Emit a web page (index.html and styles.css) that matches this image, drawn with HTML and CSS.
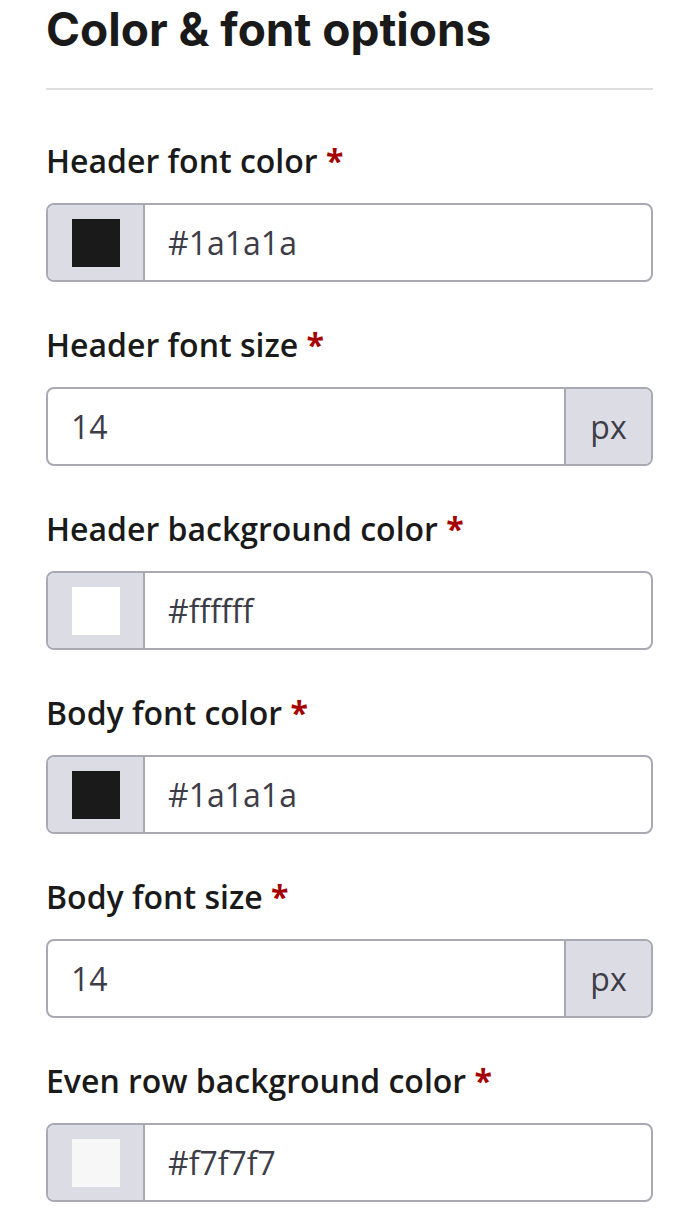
FILE: index.html
```html
<!DOCTYPE html>
<html lang="en">
<head>
<meta charset="utf-8">
<title>Color &amp; font options</title>
<link rel="stylesheet" href="styles.css">
</head>
<body>
<section class="panel">
  <h1 class="title">Color &amp; font options</h1>
  <hr class="divider">

  <div class="field">
    <label class="label">Header font color <span class="req">*</span></label>
    <div class="group">
      <span class="addon swatch-addon"><span class="swatch swatch-dark"></span></span>
      <span class="value">#1a1a1a</span>
    </div>
  </div>

  <div class="field">
    <label class="label">Header font size <span class="req">*</span></label>
    <div class="group">
      <span class="value">14</span>
      <span class="addon unit">px</span>
    </div>
  </div>

  <div class="field">
    <label class="label">Header background color <span class="req">*</span></label>
    <div class="group">
      <span class="addon swatch-addon"><span class="swatch swatch-white"></span></span>
      <span class="value">#ffffff</span>
    </div>
  </div>

  <div class="field">
    <label class="label">Body font color <span class="req">*</span></label>
    <div class="group">
      <span class="addon swatch-addon"><span class="swatch swatch-dark"></span></span>
      <span class="value">#1a1a1a</span>
    </div>
  </div>

  <div class="field">
    <label class="label">Body font size <span class="req">*</span></label>
    <div class="group">
      <span class="value">14</span>
      <span class="addon unit">px</span>
    </div>
  </div>

  <div class="field">
    <label class="label">Even row background color <span class="req">*</span></label>
    <div class="group">
      <span class="addon swatch-addon"><span class="swatch swatch-light"></span></span>
      <span class="value">#f7f7f7</span>
    </div>
  </div>
</section>
</body>
</html>
```

FILE: styles.css
```css
html, body {
  margin: 0;
  padding: 0;
  background: #ffffff;
}

body {
  font-family: "Open Sans", "Liberation Sans", sans-serif;
  color: #1a1a1a;
}

.panel {
  width: 607px;
  padding: 0 0 0 46px;
}

.title {
  font-family: Inter, "Open Sans", sans-serif;
  font-weight: 700;
  font-size: 46px;
  line-height: 56px;
  margin: 1px 0 0 0;
  color: #1a1a1a;
}

.divider {
  border: 0;
  height: 2px;
  background: #dedede;
  margin: 31px 0 0 0;
}

.field {
  display: flex;
  flex-direction: column;
}

.field:first-of-type {
  margin-top: 51px;
}

.field + .field {
  margin-top: 43px;
}

.label {
  font-size: 32px;
  font-weight: 600;
  line-height: 40px;
  margin-bottom: 22px;
  color: #1a1a1a;
}

.req {
  color: #a50000;
  font-weight: 700;
}

.group {
  display: flex;
  height: 79px;
  box-sizing: border-box;
  border: 2px solid #a9a9b6;
  border-radius: 8px;
  overflow: hidden;
  background: #ffffff;
}

.addon {
  background: #dcdce4;
  display: flex;
  align-items: center;
  justify-content: center;
  flex: none;
}

.swatch-addon {
  width: 95px;
  border-right: 2px solid #a9a9b6;
}

.unit {
  width: 85px;
  border-left: 2px solid #a9a9b6;
  font-size: 32px;
  color: #3d3d48;
}

.swatch {
  width: 48px;
  height: 48px;
  display: block;
}

.swatch-dark { background: #1a1a1a; }
.swatch-white { background: #ffffff; }
.swatch-light { background: #f7f7f7; }

.value {
  flex: 1;
  display: flex;
  align-items: center;
  padding-left: 23px;
  font-size: 32px;
  color: #3d3d48;
}
```
